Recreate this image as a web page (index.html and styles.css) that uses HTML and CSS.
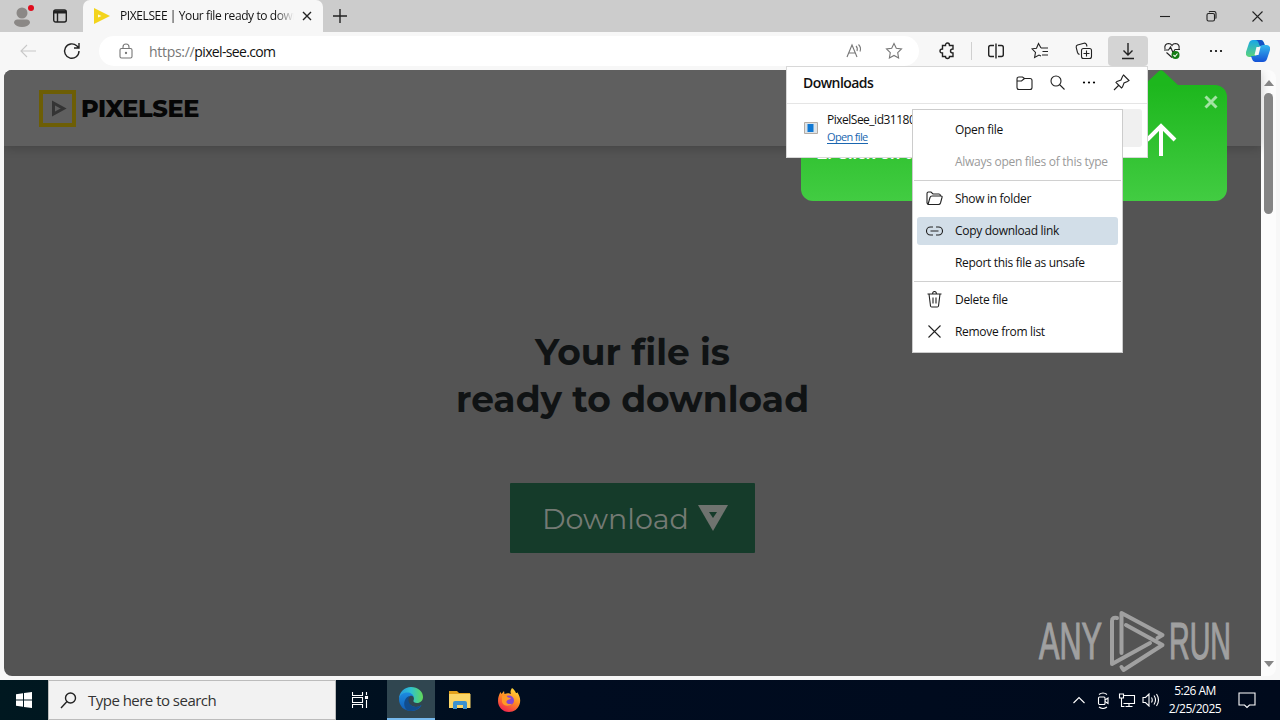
FILE: index.html
```html
<!DOCTYPE html>
<html lang="en">
  <head>
    <meta charset="UTF-8" />
    <meta name="viewport" content="width=device-width, initial-scale=1.0" />
    <title>PIXELSEE | Your file ready to download</title>
    <link rel="stylesheet" href="styles.css">
  </head>
  <body>
    <div class="tabbar">
      <div class="profile">
        <svg width="24" height="28" viewBox="0 0 24 28"><circle cx="12" cy="11" r="5.500" fill="#8b8886"/><path d="M4 21q0-3.500 3.500-3.500h9q3.500 0 3.500 3.500q-2 4-8 4t-8-4z" fill="#8b8886"/><circle cx="21" cy="6" r="3" fill="#e00b1c"/></svg>
      </div>
      <div class="tabmenu">
        <svg class="icon bold" width="16" height="16" viewBox="0 0 16 16"><rect x="1.700" y="2" width="12.600" height="12" rx="2"/><path d="M2 4h12" stroke-width="3"/><path d="M5.500 5v9"/></svg>
      </div>
      <div class="tab">
        <svg width="16" height="16" viewBox="0 0 16 16"><path d="M0 0l16 8L0 16z" fill="#f3d41c"/><path d="M4 6.500l3.500 1.500L4 9.500z" fill="#fffbe0"/></svg>
        <span class="tab-title">PIXELSEE | Your file ready to down</span>
        <svg class="icon bold" width="10" height="10" viewBox="0 0 10 10"><path d="M1 1l8 8M9 1l-8 8"/></svg>
      </div>
      <div class="newtab">
        <svg class="icon bold" width="14" height="14" viewBox="0 0 14 14"><path d="M7 0v14M0 7h14"/></svg>
      </div>
      <div class="winbuttons">
        <div><svg class="icon" width="10" height="10" viewBox="0 0 10 10"><path d="M0 5.500h10"/></svg></div>
        <div><svg class="icon" width="11" height="11" viewBox="0 0 11 11"><rect x="1" y="2.500" width="7.500" height="7.500" rx="1.500"/><path d="M3 1q.5-.5 1-.5h4q2 0 2 2v4q0 .8-.5 1"/></svg></div>
        <div><svg class="icon" width="11" height="11" viewBox="0 0 11 11"><path d="M.5.500l10 10M10.500.500l-10 10"/></svg></div>
      </div>
    </div>

    <div class="toolbar">
      <div class="tool"><svg class="icon faded" width="16" height="14" viewBox="0 0 16 14"><path d="M16 7H1M7 1L1 7l6 6"/></svg></div>
      <div class="tool"><svg class="icon bold" width="18" height="18" viewBox="0 0 18 18"><path d="M16 9a7.200 7.200 0 1 1-2.300-5.200L16 6M16 1v5h-5"/></svg></div>
      <div class="address">
        <svg class="icon grey" width="14" height="16" viewBox="0 0 14 16"><rect x="1" y="5.500" width="12" height="9.500" rx="1.500"/><path d="M4 5.500V4a3 3 0 0 1 6 0v1.500"/><circle cx="7" cy="10" r=".6"/></svg>
        <span class="url"><span class="scheme">https://</span>pixel-see.com</span>
        <svg class="icon grey" width="18" height="16" viewBox="0 0 18 16"><path d="M2 14L7 2l5 12M4 10h6M11 3q2 2 1 5M13.500 1.500q3 3 1.500 7"/></svg>
        <svg class="icon grey star" width="18" height="18" viewBox="0 0 18 18"><path d="M9 1.500l2.300 4.800 5.200.7-3.800 3.700.9 5.300L9 13.500 4.400 16l.9-5.300L1.500 7l5.200-.7z"/></svg>
      </div>
      <div class="tool"><svg class="icon bold" width="18" height="18" viewBox="0 0 18 18"><path d="M3.500 3.500h3q0-2.500 2-2.500t2 2.500H14V7q-2.500 0-2.500 2t2.500 2v3.500h-3.500q0 2-2 2t-2-2h-3V11Q1 11 1 9t2.500-2z"/></svg></div>
      <div class="divider"></div>
      <div class="tool"><svg class="icon bold" width="16" height="16" viewBox="0 0 16 16"><path d="M6 2.500H2.500Q.7 2.500.7 4.500v7q0 2 1.800 2H6M10 2.500h3.500q1.800 0 1.800 2v7q0 2-1.800 2H10M8 .500v15"/></svg></div>
      <div class="tool"><svg class="icon" width="18" height="18" viewBox="0 0 18 18"><path d="M10 6h7M11.500 9.500H17M11 13h6M10 6L7.500 1.500 5.500 6.200l-4.500.6 3.500 3.600-.9 5.100L8 13l2 1M10 6h1"/></svg></div>
      <div class="tool"><svg class="icon" width="18" height="18" viewBox="0 0 18 18"><rect x="6.500" y="6.500" width="10" height="10" rx="2"/><path d="M11.500 8.500v6M8.500 11.500h6M4.500 12.500q-1.500-.5-2-2L1.200 5.500q-.3-2 1.300-2.500L9 1.200q1.800-.3 2.500 1.300l.5 2"/></svg></div>
      <div class="tool active"><svg class="icon bold" width="14" height="18" viewBox="0 0 14 18"><path d="M7 1v12M2.500 8.500L7 13l4.500-4.500M1 16.500h12"/></svg></div>
      <div class="tool"><svg class="icon" width="18" height="18" viewBox="0 0 18 18"><path d="M2 7q-1-5 3.500-5.500Q8 1.500 9 3.500q1-2 3.500-2Q17 2 16 7M3.500 10.500L9 15.500M1 8h4.500l2-3 2.500 5.500L12 7.500h5"/><circle cx="12.500" cy="13" r="4" fill="#127c12" stroke="none"/><path d="M10.500 13l1.500 1.500 2.500-3" stroke="#fff"/></svg></div>
      <div class="tool"><svg width="14" height="4" viewBox="0 0 14 4"><circle cx="2" cy="2" r="1.100"/><circle cx="7" cy="2" r="1.100"/><circle cx="12" cy="2" r="1.100"/></svg></div>
      <div class="copilot">
        <svg width="24" height="22" viewBox="0 0 24 22">
          <defs>
            <linearGradient id="cpA" x1="0" y1="0" x2="0" y2="1"><stop offset="0" stop-color="#18a6e8"/><stop offset="1" stop-color="#5bd47a"/></linearGradient>
            <linearGradient id="cpB" x1="0" y1="0" x2="0" y2="1"><stop offset="0" stop-color="#35b8ee"/><stop offset="1" stop-color="#1452d6"/></linearGradient>
          </defs>
          <path d="M7 0h8q2 0 3 3l1 3h-4q-2 0-3 3l-2 6q-1 2-3 2H3q-4-1-3-5L3 3q1-3 4-3z" fill="url(#cpA)"/>
          <path d="M7 0h8q2 0 3 3l1 3h-4q-2 0-2-2-1-4-4-4z" fill="#1552c4"/>
          <path d="M17 22H9q-2 0-3-3l-1-3h4q2 0 3-3l2-6q1-2 3-2h4q4 1 3 5l-3 9q-1 3-4 3z" fill="url(#cpB)"/>
          <path d="M10.500 7h4l-2 8h-4z" fill="#f7f7f7"/>
        </svg>
      </div>
    </div>

    <div class="content">
      <div class="page">
        <div class="header">
          <svg width="37" height="37" viewBox="0 0 37 37"><rect x="2" y="2" width="33" height="33" fill="none" stroke="#6d5e05" stroke-width="4"/><path d="M14.500 13l10 5.500-10 5.500z" fill="none" stroke="#343434" stroke-width="3"/></svg>
          <span class="brand">PIXELSEE</span>
        </div>
        <div class="main">
          <h1>Your file is<br>ready to download</h1>
          <div class="download">
            <span>Download</span>
            <svg width="30" height="26" viewBox="0 0 30 26"><path d="M0 0h30L15 26z" fill="#6f736f"/><path d="M11 7h8l-4 6z" fill="#153b2a"/></svg>
          </div>
        </div>
      </div>
      <div class="scrollbar">
        <svg width="10" height="6" viewBox="0 0 10 6"><path d="M0 6l5-6 5 6z" fill="#858585"/></svg>
        <div class="thumb"></div>
        <svg width="10" height="6" viewBox="0 0 10 6"><path d="M0 0l5 6 5-6z" fill="#858585"/></svg>
      </div>
    </div>

    <div class="taskbar">
      <div class="start">
        <svg width="16" height="16" viewBox="0 0 16 16" fill="#fff"><path d="M0 2.200l7-1v6.300H0zM8 1l8-1v7.500H8zM0 8.500h7v6.300l-7-1zM8 8.500h8V16l-8-1z"/></svg>
      </div>
      <div class="search">
        <svg class="icon bold" width="17" height="17" viewBox="0 0 17 17"><circle cx="10.500" cy="6" r="5"/><path d="M7 9.500L1 16"/></svg>
        <span>Type here to search</span>
      </div>
      <div class="app">
        <svg class="icon light" width="17" height="16" viewBox="0 0 17 16"><path d="M.5 0v3.500h10V0M.5 16v-3.500h10V16M.5 5.500h10v5H.5zM14.500 0v3M14.500 8v8"/><rect x="13.500" y="4.500" width="2" height="2"/></svg>
      </div>
      <div class="app current">
        <svg width="24" height="24" viewBox="0 0 24 24">
          <defs>
            <linearGradient id="edA" x1="0" y1="0" x2="1" y2="0"><stop offset="0" stop-color="#2697e0"/><stop offset=".5" stop-color="#2fc2cf"/><stop offset="1" stop-color="#62d957"/></linearGradient>
            <linearGradient id="edB" x1="0" y1="0" x2="0" y2="1"><stop offset="0" stop-color="#1c8be0"/><stop offset="1" stop-color="#125db5"/></linearGradient>
          </defs>
          <path d="M0 12C0 5 5.500 0 12 0c7 0 12 4.500 12 10 0 3.500-2.500 6-6 6-2.500 0-4-1-3.500-2.500C16 11 14 7 9 7c-4.500 0-8 2-9 5z" fill="url(#edA)"/>
          <path d="M0 12c.5-4 4-6.500 8.500-6.500 3 0 6 2 6.500 5-1-1.500-2.500-2-4-1.500-3 1-4 8 3 10.500 3 1 6 .5 8.500-1.500C20.500 22 16.500 24 12 24 5 24 0 19 0 12z" fill="url(#edB)"/>
          <path d="M8 23.300C2.500 18 6 9.500 11 9c-3 3-1.500 8.500 3 10.500 3 1 6 .5 8.500-1.500-3 5-9 7-14.500 5.300z" fill="#124d8d"/>
        </svg>
      </div>
      <div class="app">
        <svg width="22" height="20" viewBox="0 0 22 20"><path d="M0 1h8l2 2h11v6H0z" fill="#e3a21c"/><path d="M0 4h21.500v14H0z" fill="#fbd667"/><path d="M4 19v-6q0-2 2-2h10q2 0 2 2v6h-4v-4H8v4z" fill="#3b92d0"/></svg>
      </div>
      <div class="app">
        <svg width="24" height="24" viewBox="0 0 24 24">
          <defs><linearGradient id="ff" x1=".8" y1="0" x2=".3" y2="1"><stop offset="0" stop-color="#ffe03b"/><stop offset=".5" stop-color="#ff8a24"/><stop offset="1" stop-color="#f0234f"/></linearGradient></defs>
          <path d="M15 0c2 1 3 3 4 5 1 0 1 0 1-1 3 4 4 8 2.500 12.500C21 21 17 24 12 24 5.500 24 1 19 1 13c0-4 1-6 2.500-9l1 2L7 3l.5 3C10 5 12 5 14 6c-1-2-.5-4 1-6z" fill="url(#ff)"/>
          <circle cx="12" cy="12.500" r="5" fill="#8547d1"/>
          <path d="M5 8c3-1 5 0 6 1.500L14 10c-1 2-4 1.500-4.500 3.500-.5 2 3 3.500 6 2-2 3-9 3.500-10.500-1.500z" fill="#ff9a26"/>
        </svg>
      </div>
      <div class="tray">
        <svg class="icon light" height="8" viewBox="0 0 12 8"><path d="M.5 7L6 1.500 11.500 7"/></svg>
        <svg class="icon light" height="17" viewBox="0 0 11 17"><rect x="1" y="5" width="6.500" height="7.500" rx="1"/><path d="M7.500 8l3-2v5.500l-3-2M1.500 2.500q4-3 8 0M1.500 15q4 3 8 0"/></svg>
        <svg class="icon light" height="15" viewBox="0 0 16 15"><path d="M5 2.500h10.500v8H4.500M10 10.500v3M6.500 13.500h7M.5 1h4v4h-4zM2.500 5v8.500h3"/></svg>
        <svg class="icon light" height="14" viewBox="0 0 17 14"><path d="M.5 4.500h2.500L6.500 1v12L3 9.500H.5zM9 4.500q1.500 2.500 0 5M11.500 2.500q3 4.500 0 9M14 1q4 6 0 12"/></svg>
        <div class="clock">5:26 AM<br>2/25/2025</div>
        <svg class="icon light" height="17" viewBox="0 0 17 17"><path d="M.5 1h16v12H11l-2.500 2.500L6 13H.5z"/></svg>
      </div>
    </div>

    <div class="hint">
      <svg class="hint-tip" width="36" height="16" viewBox="0 0 36 16"><path d="M0 16L16 1q2-1.500 4 0l16 15z" fill="#1db71d"/></svg>
      <span class="hint-text">2. Click on the</span>
      <svg class="hint-arrow" width="32" height="34" viewBox="0 0 32 34"><path d="M16 33V3M2 17L16 3l14 14" fill="none" stroke="#fff" stroke-width="4"/></svg>
      <svg class="hint-close" width="14" height="14" viewBox="0 0 14 14"><path d="M1.500 1.500l11 11M12.500 1.500l-11 11" fill="none" stroke="#a2e3a2" stroke-width="3"/></svg>
    </div>

    <div class="downloads">
      <div class="downloads-head">
        <b>Downloads</b>
        <svg class="icon" width="17" height="16" viewBox="0 0 17 16"><path d="M1 4q0-2 2-2h3.500l2 1.500H14q2 0 2 2v7q0 2-2 2H3q-2 0-2-2zM1 6h4.500l3-2.500"/></svg>
        <svg class="icon" width="15" height="15" viewBox="0 0 15 15"><circle cx="6" cy="6" r="5"/><path d="M9.500 9.500l5 5"/></svg>
        <svg width="14" height="4" viewBox="0 0 14 4"><circle cx="2" cy="1.500" r="1.100"/><circle cx="7" cy="1.500" r="1.100"/><circle cx="12" cy="1.500" r="1.100"/></svg>
        <svg class="icon" width="17" height="17" viewBox="0 0 17 17"><path d="M10.500 1l5.500 5.500-1.500 1-3.500 1.500-1.500 4-1 1L3 8.500l1-1 4-1.500L9.500 2.500zM5.500 11.500L1 16"/></svg>
      </div>
      <div class="downloads-row">
        <svg width="14" height="12" viewBox="0 0 14 12"><path d="M.5.500h13v11H.5z" fill="#dce3e8" stroke="#b5aca4"/><path d="M3.500 2h6v8h-6z" fill="#0f78d4"/></svg>
        <div class="file">
          <span class="filename">PixelSee_id31180</span>
          <a class="openfile">Open file</a>
        </div>
        <div class="rowbutton"></div>
      </div>
    </div>

    <div class="menu">
      <div class="item"><span class="slot"></span>Open file</div>
      <div class="item disabled"><span class="slot"></span>Always open files of this type</div>
      <div class="line"></div>
      <div class="item"><span class="slot"><svg class="icon" width="17" height="15" viewBox="0 0 17 15"><path d="M2 13L1 12V2.500Q1 1 2.500 1H5l2 2h6q1.500 0 1.500 2M2 13.500l2-7Q4.500 5 6 5h9q1.500 0 1 1.500l-1.500 5.500q-.5 1.500-2 1.500z"/></svg></span>Show in folder</div>
      <div class="item hovered"><span class="slot"><svg class="icon" width="17" height="10" viewBox="0 0 17 10"><path d="M7 1H4.500a4 4 0 0 0 0 8H7M10 1h2.500a4 4 0 0 1 0 8H10M4.500 5h8"/></svg></span>Copy download link</div>
      <div class="item"><span class="slot"></span>Report this file as unsafe</div>
      <div class="line"></div>
      <div class="item"><span class="slot"><svg class="icon" width="15" height="17" viewBox="0 0 15 17"><path d="M.5 3h14M2 3l1.500 12q.2 1 1.200 1h5.600q1 0 1.200-1L13 3M5.500 3q0-2.500 2-2.500t2 2.500M6 6.500v6M9 6.500v6"/></svg></span>Delete file</div>
      <div class="item"><span class="slot"><svg class="icon" width="13" height="13" viewBox="0 0 13 13"><path d="M.5.500l12 12M12.500.500l-12 12"/></svg></span>Remove from list</div>
    </div>

    <div class="watermark">
      <svg width="200" height="64" viewBox="0 0 200 64">
        <g class="watermark-text">
          <text x="2" y="50" textLength="63" lengthAdjust="spacingAndGlyphs">ANY</text>
          <text x="132" y="50" textLength="62" lengthAdjust="spacingAndGlyphs">RUN</text>
        </g>
        <path class="watermark-logo" d="M84.500 44V4l41 22-5 3M89 16l36.500 20-39 25-2-3M80 9q-5-1-5 3v43l38-21"/>
      </svg>
    </div>
  </body>
</html>
```
FILE: styles.css
```css
* {
  box-sizing: border-box;
}
body {
  margin: 0;
  width: 1280px;
  height: 720px;
  display: flex;
  flex-direction: column;
  overflow: hidden;
  position: relative;
  background: #f7f7f7;
  color: #111;
  font-family: "Open Sans", sans-serif;
  font-size: 12px;
}
svg {
  display: block;
  flex: none;
}
.icon {
  fill: none;
  stroke: #222;
  stroke-width: 1.1;
}
.bold {
  stroke-width: 1.4;
}
.grey {
  stroke: #777;
}
.faded {
  stroke: #c8c8c8;
}
.light {
  stroke: #fff;
}

/* tabs */
.tabbar {
  height: 32px;
  display: flex;
  background: #cccccc;
}
.profile {
  width: 42px;
  padding: 2px 0 0 10px;
}
.tabmenu {
  width: 41px;
  padding: 8px 0 0 10px;
}
.tab {
  width: 240px;
  display: flex;
  align-items: center;
  padding: 0 11px 0 11px;
  background: #f7f7f7;
  border-radius: 7px 7px 0 0;
}
.tab-title {
  width: 175px;
  margin: 0 8px 0 10px;
  overflow: hidden;
  white-space: nowrap;
  letter-spacing: -0.4px;
  margin-top: -1px;
  -webkit-mask-image: linear-gradient(to right, #000 155px, transparent 174px);
}
.newtab {
  padding: 9px 0 0 10px;
}
.winbuttons {
  margin-left: auto;
  display: flex;
}
.winbuttons div {
  width: 46px;
  display: flex;
  align-items: center;
  justify-content: center;
}

/* toolbar */
.toolbar {
  height: 38px;
  display: flex;
  align-items: center;
  padding-left: 6px;
}
.tool {
  width: 40px;
  height: 30px;
  margin: 0 2px;
  display: flex;
  align-items: center;
  justify-content: center;
}
.active {
  background: #d4d4d4;
  border-radius: 4px;
}
.address {
  width: 820px;
  height: 30px;
  margin: 0 7px 0 5px;
  padding: 0 16px 0 20px;
  display: flex;
  align-items: center;
  background: white;
  border-radius: 15px;
}
.url {
  flex: 1;
  margin-left: 16px;
  font-size: 14px;
  letter-spacing: -0.65px;
}
.scheme {
  color: #777;
  letter-spacing: -0.3px;
}
.star {
  margin-left: 22px;
}
.divider {
  width: 1px;
  height: 18px;
  margin: 0 2px 0 1px;
  background: #d0d0d0;
}
.copilot {
  margin-left: 8px;
}

/* web page */
.content {
  height: 606px;
  margin: 0 4px 4px;
  display: flex;
  background: #fcfcfc;
  border-radius: 8px;
  overflow: hidden;
}
.page {
  width: 1257px;
  background: #545454;
  font-family: Montserrat, Lato, sans-serif;
}
.header {
  height: 76px;
  display: flex;
  align-items: center;
  padding-left: 35px;
  background: #5f5f5f;
  box-shadow: 0 2px 10px rgba(0, 0, 0, 0.2);
}
.brand {
  margin: 1px 0 0 5px;
  font-size: 24px;
  font-weight: 800;
  letter-spacing: -0.35px;
  color: #060606;
}
.main {
  display: flex;
  flex-direction: column;
  align-items: center;
  padding-top: 183px;
}
h1 {
  margin: 0;
  text-align: center;
  font-size: 36px;
  line-height: 47px;
  font-weight: 700;
  color: #101314;
}
.download {
  width: 245px;
  height: 70px;
  margin-top: 60px;
  display: flex;
  align-items: center;
  padding-left: 32px;
  background: #153b2a;
  border-radius: 1px;
  font-size: 28.5px;
  color: #747a74;
}
.download span {
  width: 156px;
}
.scrollbar {
  width: 15px;
  display: flex;
  flex-direction: column;
  align-items: center;
  padding: 10px 0 9px;
}
.thumb {
  width: 9px;
  height: 121px;
  margin: 7px 0 auto;
  background: #858585;
  border-radius: 5px;
}

/* taskbar */
.taskbar {
  height: 40px;
  display: flex;
  background: linear-gradient(to right, #001820, #000c20 45%, #000a1c);
}
.start {
  width: 48px;
  display: flex;
  align-items: center;
  justify-content: center;
}
.search {
  width: 288px;
  display: flex;
  align-items: center;
  padding-left: 11px;
  background: #f2f2f2;
  border: 1px solid #bcbcbc;
  font-size: 15px;
  color: #333;
}
.search span {
  margin-left: 11px;
  letter-spacing: -0.52px;
}
.app {
  width: 48px;
  margin-right: 1px;
  display: flex;
  align-items: center;
  justify-content: center;
}
.current {
  margin-left: 2px;
  background: #304650;
  border-bottom: 2px solid #76b9ed;
}
.tray {
  margin-left: auto;
  display: flex;
  align-items: center;
  padding-right: 21px;
  color: white;
}
.tray .icon {
  width: 24px;
}
.clock {
  width: 60px;
  margin: 0 10px 0 2px;
  text-align: center;
  line-height: 18px;
  letter-spacing: -0.5px;
}

/* green hint under the downloads button */
.hint {
  position: absolute;
  left: 801px;
  top: 85px;
  width: 426px;
  height: 116px;
  border-radius: 12px;
  background: linear-gradient(#1db71d, #42cc42);
}
.hint-tip {
  position: absolute;
  left: 342px;
  top: -15px;
}
.hint-text {
  position: absolute;
  left: 16px;
  top: 56px;
  font: bold 18px Lato, sans-serif;
  color: white;
}
.hint-arrow {
  position: absolute;
  left: 344px;
  top: 38px;
}
.hint-close {
  position: absolute;
  left: 403px;
  top: 10px;
}

/* downloads flyout */
.downloads {
  position: absolute;
  left: 786px;
  top: 66px;
  width: 362px;
  height: 92px;
  background: white;
  border: 1px solid #d8d8d8;
}
.downloads-head {
  height: 37px;
  display: flex;
  align-items: center;
  gap: 17px;
  padding: 0 17px 5px 16px;
  border-bottom: 1px solid #e5e5e5;
}
.downloads-head b {
  margin-right: auto;
  font-size: 14px;
  font-weight: 600;
  letter-spacing: -0.55px;
}
.downloads-row {
  display: flex;
  padding: 5px 5px 0 17px;
}
.downloads-row svg {
  margin-top: 13px;
}
.file {
  flex: 1;
  margin-left: 9px;
  display: flex;
  flex-direction: column;
  align-items: flex-start;
}
.filename {
  line-height: 22px;
  letter-spacing: -0.5px;
}
.openfile {
  margin-top: -1px;
  font-size: 11px;
  line-height: 13px;
  letter-spacing: -0.65px;
  color: #1a66b0;
  border-bottom: 1px solid #1a66b0;
}
.rowbutton {
  width: 32px;
  height: 38px;
  background: #f0f0f0;
  border-radius: 3px;
}

/* context menu */
.menu {
  position: absolute;
  left: 912px;
  top: 109px;
  width: 211px;
  height: 244px;
  display: flex;
  flex-direction: column;
  padding: 4px 0 3px;
  background: white;
  border: 1px solid #ccc;
}
.item {
  height: 28px;
  flex: none;
  margin: 2px 4px;
  padding-bottom: 1px;
  display: flex;
  align-items: center;
  border-radius: 3px;
  white-space: nowrap;
  letter-spacing: -0.31px;
}
.slot {
  width: 35px;
  margin-right: 3px;
  display: flex;
  justify-content: center;
}
.line {
  height: 1px;
  margin: 2px 1px;
  background: #d0d0d0;
}
.disabled {
  color: #9a9a9a;
  letter-spacing: -0.28px;
}
.hovered {
  background: #d2dee8;
}

.watermark {
  position: absolute;
  left: 1037px;
  top: 609px;
}
.watermark-text {
  font-family: "Liberation Sans", sans-serif;
  font-size: 51px;
  fill: #a0a0a0;
  stroke: #a0a0a0;
  stroke-width: 1.2;
}
.watermark-logo {
  fill: none;
  stroke: #a0a0a0;
  stroke-width: 4;
  stroke-linejoin: round;
  stroke-linecap: round;
}
```
